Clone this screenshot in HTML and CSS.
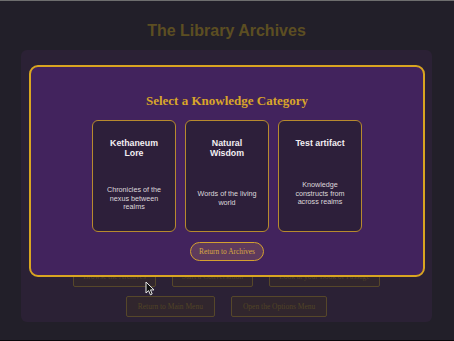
FILE: index.html
```html
<!DOCTYPE html>
<html>
<head>
	<title>The Library Archives</title>
	<link rel="stylesheet" href="styles.css">
</head>
<body>
<div class="page">
	<h1 class="title">The Library Archives</h1>

	<div class="panel">
		<div class="actions">
			<button class="action narrow">Browse the Archives</button>
			<button class="action narrow">Start a Conversation</button>
			<button class="action narrow">Look at your Book of Passage</button>
		</div>
		<div class="actions">
			<button class="action">Return to Main Menu</button>
			<button class="action">Open the Options Menu</button>
		</div>
	</div>
</div>

<div class="overlay">
	<div class="modal">
		<h2>Select a Knowledge Category</h2>

		<div class="categories">
			<div class="category">
				<h3>Kethaneum Lore</h3>
				<div class="desc">Chronicles of the nexus between realms</div>
			</div>
			<div class="category">
				<h3>Natural Wisdom</h3>
				<div class="desc">Words of the living world</div>
			</div>
			<div class="category">
				<h3>Test artifact</h3>
				<div class="desc">Knowledge constructs from across realms</div>
			</div>
		</div>

		<button class="back">Return to Archives</button>
	</div>
</div>

<svg class="cursor" width="11" height="15" viewBox="0 0 11 15">
	<path d="M1 1 L1 12 L3.6 9.6 L5.4 13.8 L7.2 13 L5.5 8.9 L9 8.9 Z" fill="#111" stroke="#e8e8e8" stroke-width="1"/>
</svg>
</body>
</html>
```

FILE: styles.css
```css
body {
	margin: 0;
	border-top: solid 1px #dcdcdc;
	background-color: #121016;
}

.page {
	height: 339px;
	padding: 0 22px 0 21px;
	background-color: #443e52;
	overflow: hidden;
}

.title {
	margin: 0;
	padding: 20px 0 10px;
	font-family: "Liberation Sans", Arial, sans-serif;
	font-size: 16px;
	line-height: 19px;
	text-align: center;
	color: #b89c44;
}

.panel {
	height: 272px;
	box-sizing: border-box;
	display: flex;
	flex-direction: column;
	justify-content: flex-end;
	gap: 9px;
	padding-bottom: 5px;
	border-radius: 6px;
	background-color: #56426a;
}

.actions {
	display: flex;
	justify-content: center;
	gap: 16px;
}

.action {
	height: 21px;
	padding: 0 11px;
	border: solid 1px #ac8e54;
	border-radius: 2px;
	background-color: #624c5a;
	color: #a0864c;
	font-family: "Liberation Serif", "Times New Roman", serif;
	font-size: 7.5px;
}

.action.narrow {
	padding: 0 9px;
}

.overlay {
	position: fixed;
	top: 0;
	left: 0;
	right: 0;
	bottom: 0;
	display: flex;
	align-items: center;
	justify-content: center;
	background-color: rgba(0, 0, 0, 0.5);
}

.modal {
	width: 396px;
	box-sizing: border-box;
	padding: 26px 20px 14px;
	border: solid 2px #d9a521;
	border-radius: 9px;
	background-color: #42235d;
	text-align: center;
}

.modal h2 {
	margin: 0 0 12px;
	font-family: "Liberation Serif", "Times New Roman", serif;
	font-size: 13px;
	line-height: 15px;
	color: #d9a62a;
}

.categories {
	display: flex;
	justify-content: center;
	gap: 9px;
}

.category {
	width: 84px;
	height: 112px;
	box-sizing: border-box;
	display: flex;
	flex-direction: column;
	padding: 17.5px 9px 6px;
	border: solid 1.5px #b78a2e;
	border-radius: 6px;
	background-color: #2d1f3a;
	font-family: "Liberation Sans", Arial, sans-serif;
}

.category h3 {
	margin: 0 0 15px;
	font-size: 8.8px;
	line-height: 10px;
	color: #f2eef2;
}

.desc {
	flex: 1;
	display: flex;
	align-items: center;
	justify-content: center;
	font-size: 7.2px;
	line-height: 8.5px;
	color: #ddd8dc;
}

.back {
	margin-top: 10px;
	height: 19px;
	padding: 0 8px;
	border: solid 1.5px #d4a030;
	border-radius: 10px;
	background-color: #5e3a5c;
	color: #d8a842;
	font-family: "Liberation Serif", "Times New Roman", serif;
	font-size: 7.4px;
}

.cursor {
	position: fixed;
	left: 145px;
	top: 281px;
}
```
